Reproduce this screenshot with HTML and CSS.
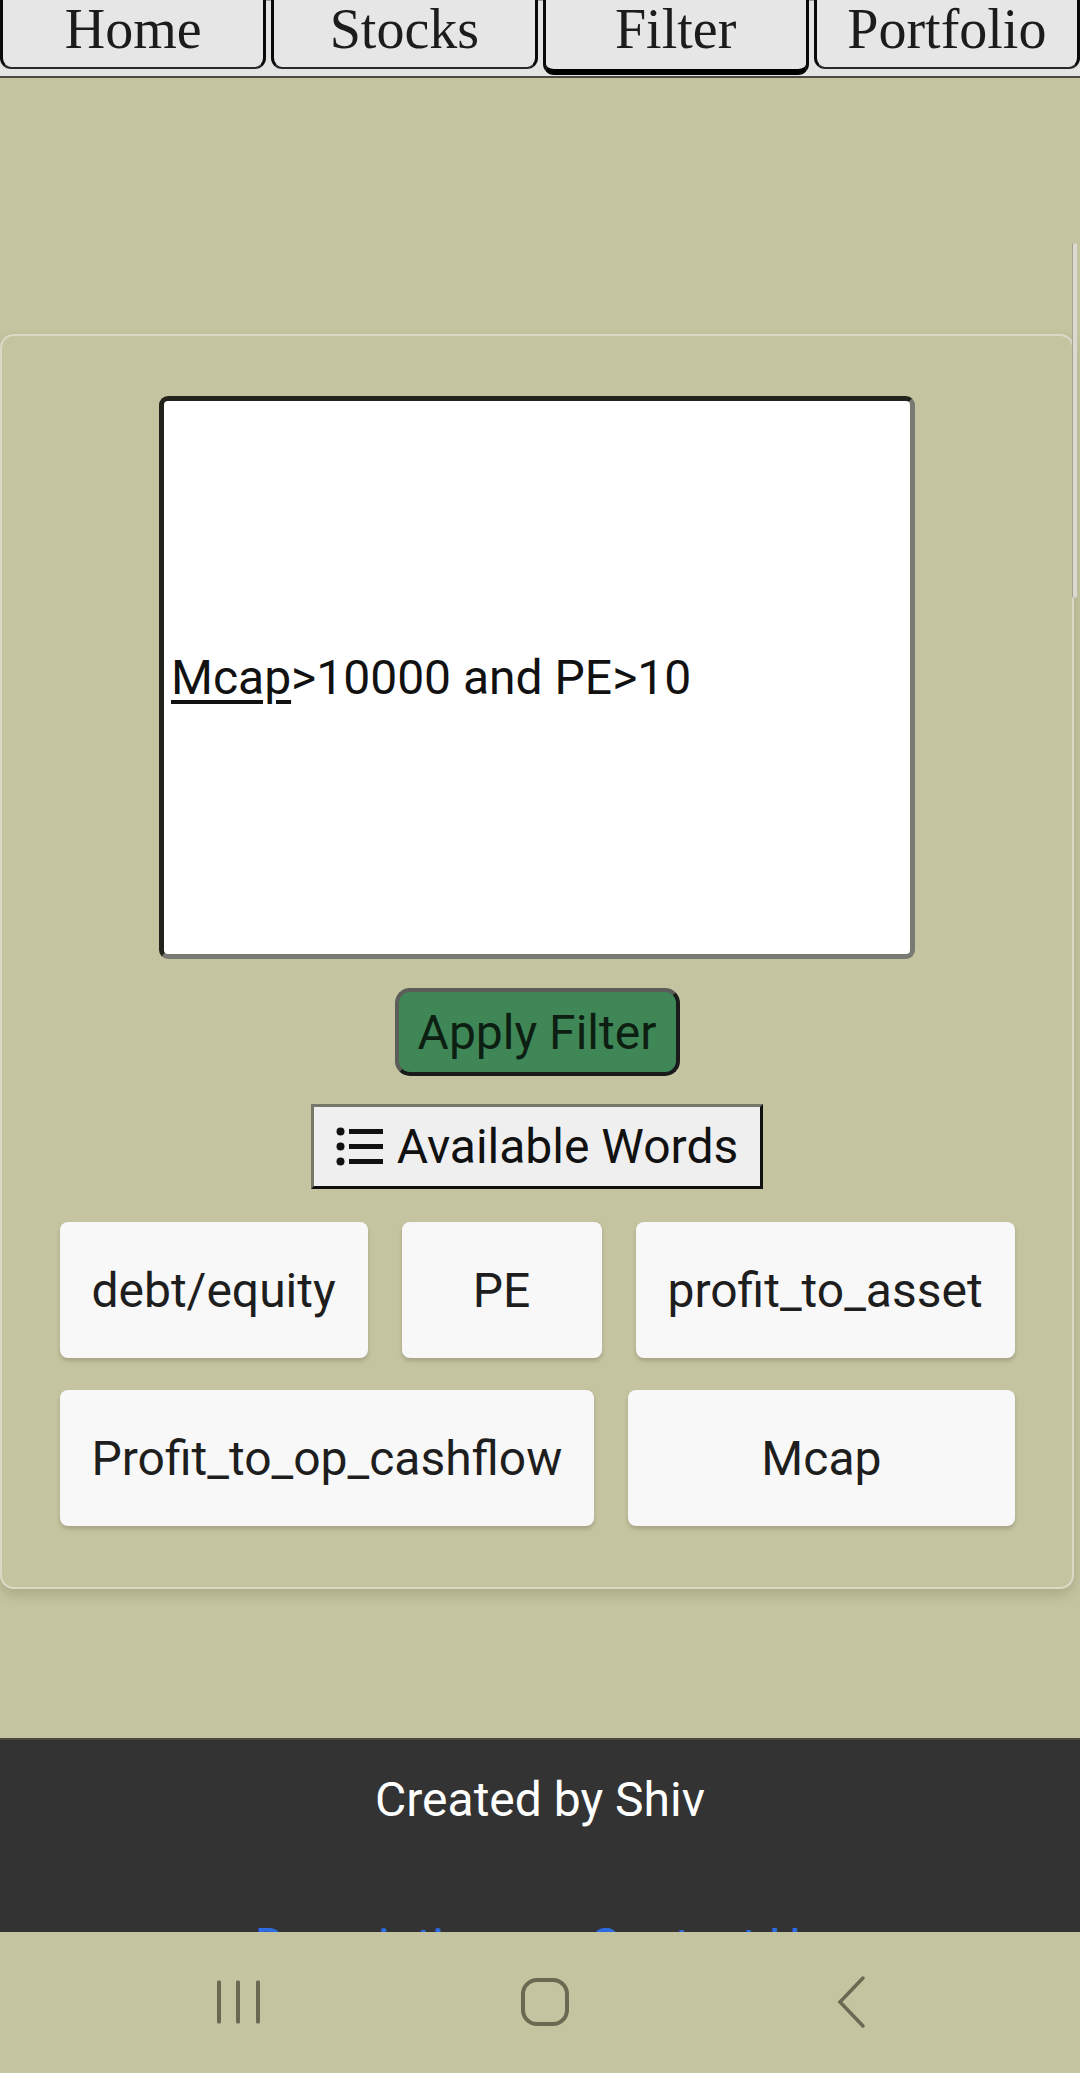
FILE: index.html
```html
<!DOCTYPE html>
<html lang="en">
<head>
<meta charset="utf-8">
<title>Filter</title>
<link rel="stylesheet" href="styles.css">
</head>
<body>
<nav class="tabs">
  <a class="tab">Home</a>
  <a class="tab">Stocks</a>
  <a class="tab tab-active">Filter</a>
  <a class="tab">Portfolio</a>
</nav>

<main class="main">
  <section class="card">
    <div class="editor"><span class="composing">Mcap</span>&gt;10000 and PE&gt;10</div>
    <button class="apply">Apply Filter</button>
    <button class="words">
      <svg class="list-icon" width="47" height="39" viewBox="0 0 47 39" aria-hidden="true">
        <circle cx="4.5" cy="4.5" r="4" fill="#111"/>
        <circle cx="4.5" cy="19.5" r="4" fill="#111"/>
        <circle cx="4.5" cy="34.5" r="4" fill="#111"/>
        <rect x="13" y="2" width="34" height="5" fill="#111"/>
        <rect x="13" y="17" width="34" height="5" fill="#111"/>
        <rect x="13" y="32" width="34" height="5" fill="#111"/>
      </svg>
      <span>Available Words</span>
    </button>
    <div class="chips">
      <div class="chip-row">
        <span class="chip chip-fill">debt/equity</span>
        <span class="chip chip-fill">PE</span>
        <span class="chip chip-fill">profit_to_asset</span>
      </div>
      <div class="chip-row">
        <span class="chip">Profit_to_op_cashflow</span>
        <span class="chip chip-fill">Mcap</span>
      </div>
    </div>
  </section>
</main>

<footer class="footer">
  <p class="credit">Created by Shiv</p>
  <div class="links">
    <a class="link">Descriptions</a>
    <a class="link">Contact Us</a>
  </div>
</footer>

<div class="scroll-thumb"></div>

<div class="sysnav">
  <span class="sys-cell">
    <svg width="46" height="46" viewBox="0 0 46 46" aria-hidden="true">
      <rect x="1" y="1.5" width="4" height="43" rx="1.5" fill="#6a6a52"/>
      <rect x="20" y="1.5" width="4" height="43" rx="1.5" fill="#6a6a52"/>
      <rect x="40" y="1.5" width="4" height="43" rx="1.5" fill="#6a6a52"/>
    </svg>
  </span>
  <span class="sys-cell">
    <svg width="50" height="50" viewBox="0 0 50 50" aria-hidden="true">
      <rect x="3" y="3" width="44" height="44" rx="14" fill="none" stroke="#6a6a52" stroke-width="4"/>
    </svg>
  </span>
  <span class="sys-cell">
    <svg width="32" height="54" viewBox="0 0 32 54" aria-hidden="true">
      <polyline points="28,3 5,27 28,51" fill="none" stroke="#6a6a52" stroke-width="3.5" stroke-linecap="round" stroke-linejoin="miter"/>
    </svg>
  </span>
</div>
</body>
</html>
```

FILE: styles.css
```css
html, body {
  margin: 0;
  padding: 0;
  height: 2073px;
  overflow: hidden;
}

body {
  background: #c4c4a0;
  font-family: Roboto, "Liberation Sans", sans-serif;
  color: #111;
  position: relative;
}

/* top tabs */
.tabs {
  display: flex;
  align-items: flex-start;
  gap: 5px;
  height: 75px;
  background: #e4e4e2;
  border-top: 1px solid #9a9a9a;
  border-bottom: 2px solid #4a4a44;
  box-sizing: content-box;
}

.tab {
  flex: 1;
  box-sizing: border-box;
  height: 69px;
  margin-top: -1px;
  background: #e6e6e6;
  border-left: 3px solid #0a0a0a;
  border-right: 3px solid #0a0a0a;
  border-bottom: 2px solid #2a2a2a;
  border-radius: 0 0 11px 11px;
  font-family: "Liberation Serif", "DejaVu Serif", serif;
  font-size: 56px;
  line-height: 59px;
  text-align: center;
  color: #1c1c1c;
}

.tab-active {
  height: 75px;
  border-bottom: 6px solid #000;
}

/* main */
.main {
  padding-top: 256px;
  padding-bottom: 149px;
}

.card {
  margin-right: 6px;
  box-sizing: border-box;
  border: 2px solid #d9d9c6;
  border-radius: 14px;
  box-shadow: 0 6px 12px rgba(60, 60, 30, 0.18);
  padding: 60px 0 61px;
  display: flex;
  flex-direction: column;
  align-items: center;
}

.editor {
  box-sizing: border-box;
  width: 756px;
  height: 563px;
  background: #fff;
  border: 5px solid;
  border-color: #23231b #7a7a74 #7a7a74 #23231b;
  border-radius: 9px;
  display: flex;
  align-items: center;
  padding-left: 7px;
  font-size: 48px;
  color: #111;
  white-space: pre;
}

.composing {
  text-decoration: underline;
  text-decoration-thickness: 4px;
  text-underline-offset: 6px;
}

.apply {
  margin-top: 29px;
  box-sizing: border-box;
  width: 285px;
  height: 88px;
  background: #3f8757;
  border: 4px solid;
  border-color: #5c5c58 #1a1a1a #1a1a1a #5c5c58;
  border-radius: 15px;
  font-family: Roboto, "Liberation Sans", sans-serif;
  font-size: 48px;
  color: #0c1f12;
  padding: 0;
}

.words {
  margin-top: 28px;
  box-sizing: border-box;
  width: 452px;
  height: 85px;
  background: #efefef;
  border: 3px solid;
  border-color: #77776a #111 #111 #77776a;
  border-radius: 0;
  display: flex;
  align-items: center;
  justify-content: center;
  gap: 14px;
  font-family: Roboto, "Liberation Sans", sans-serif;
  font-size: 48px;
  color: #111;
  padding: 0;
}

.list-icon {
  flex: none;
}

.chips {
  margin-top: 33px;
  width: 955px;
  display: flex;
  flex-direction: column;
  gap: 32px;
}

.chip-row {
  display: flex;
  gap: 34px;
}

.chip {
  flex: 0 0 auto;
  box-sizing: border-box;
  height: 136px;
  min-width: 200px;
  padding: 0 32px;
  background: #f8f8f8;
  border-radius: 8px;
  box-shadow: 0 3px 4px rgba(0, 0, 0, 0.16);
  display: flex;
  align-items: center;
  justify-content: center;
  font-size: 48px;
  color: #1e1e1e;
  white-space: nowrap;
}

.chip-fill {
  flex: 1 1 auto;
}

/* footer */
.footer {
  background: #333;
  border-top: 2px solid #4a4a3c;
  padding-top: 31px;
  height: 400px;
  text-align: center;
}

.credit {
  margin: 0;
  font-size: 48px;
  color: #fff;
}

.links {
  margin-top: 89px;
  display: flex;
  justify-content: center;
  gap: 67px;
}

.link {
  font-size: 48px;
  color: #2c6be0;
}

/* overlays */
.scroll-thumb {
  position: absolute;
  top: 243px;
  right: 3px;
  width: 4px;
  height: 355px;
  background: #dadad0;
  border-radius: 3px;
  box-shadow: -1px 0 0 #a4a48e;
}

.sysnav {
  position: absolute;
  left: 0;
  right: 0;
  top: 1932px;
  height: 141px;
  background: #c4c4a0;
  display: flex;
  justify-content: center;
  align-items: center;
  padding-left: 9px;
  padding-bottom: 2px;
  box-sizing: border-box;
}

.sys-cell {
  width: 306px;
  display: flex;
  justify-content: center;
  align-items: center;
}
```
